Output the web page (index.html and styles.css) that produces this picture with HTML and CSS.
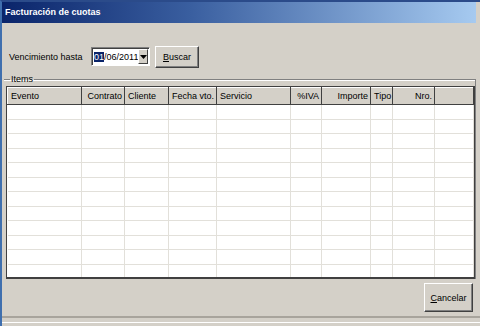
FILE: index.html
```html
<!DOCTYPE html>
<html lang="es">
<head>
    <meta charset="UTF-8">
    <title>Facturación de cuotas</title>
    <link rel="stylesheet" href="styles.css">
</head>
<body>
<div class="window">
    <div class="titlebar">Facturación de cuotas</div>
    <div class="client">
        <div class="filter">
            <span class="label">Vencimiento hasta</span>
            <div class="datebox">
                <span class="datetext"><span class="sel">01</span>/06/2011</span>
                <span class="drop"><svg width="7" height="4" viewBox="0 0 7 4"><path d="M0 0h7L3.5 4z" fill="#000"/></svg></span>
            </div>
            <button class="btn btn-buscar"><u>B</u>uscar</button>
        </div>

        <fieldset class="group">
            <legend>Items</legend>
            <div class="grid">
                <table>
                    <colgroup>
                        <col style="width:74px"><col style="width:43px"><col style="width:44px">
                        <col style="width:48px"><col style="width:74px"><col style="width:31px">
                        <col style="width:49px"><col style="width:22px"><col style="width:42px">
                        <col>
                    </colgroup>
                    <thead>
                    <tr>
                        <th>Evento</th>
                        <th class="r">Contrato</th>
                        <th>Cliente</th>
                        <th class="r">Fecha vto.</th>
                        <th>Servicio</th>
                        <th class="r">%IVA</th>
                        <th class="r">Importe</th>
                        <th>Tipo</th>
                        <th class="r">Nro.</th>
                        <th></th>
                    </tr>
                    </thead>
                    <tbody id="rows"></tbody>
                </table>
            </div>
        </fieldset>

        <div class="footer">
            <button class="btn btn-cancelar"><u>C</u>ancelar</button>
        </div>
    </div>
    <div class="statusline"></div>
</div>
<script>
    // filas vacias de la grilla
    var tb=document.getElementById("rows");
    for (var i=0;i<12;i++){
        var tr=document.createElement("tr");
        for (var j=0;j<10;j++){
            tr.appendChild(document.createElement("td"));
        }
        tb.appendChild(tr);
    }
</script>
</body>
</html>
```

FILE: styles.css
```css
*{
    margin: 0;
    padding: 0;
    box-sizing: border-box;
}
html,body{
    width: 480px;
    height: 326px;
    overflow: hidden;
    background-color: #d4d0c8;
}
body{
    font-family: "Liberation Sans", Arial, sans-serif;
    font-size: 9px;
    color: #000;
    white-space: nowrap;
}
.window{
    width: 480px;
    height: 326px;
    display: flex;
    flex-direction: column;
    border-left: 2px solid #3f6fae;
    border-top: 2px solid #2b4b8a;
    background-color: #d4d0c8;
}
.titlebar{
    height: 21px;
    line-height: 21px;
    padding-left: 3px;
    margin-right: 4px;
    color: #fff;
    font-weight: bold;
    font-size: 9px;
    background: linear-gradient(to right, #0a246a 0%, #3a5fa0 40%, #a6caf0 100%);
}
.client{
    flex: 1;
    display: flex;
    flex-direction: column;
    padding: 22px 4px 0 2px;
}
.filter{
    display: flex;
    align-items: center;
    height: 23px;
    padding-left: 5px;
}
.label{
    width: 82px;
}
.datebox{
    display: flex;
    align-items: center;
    width: 59px;
    height: 19px;
    background: #fff;
    border-top: 1px solid #808080;
    border-left: 1px solid #808080;
    border-right: 1px solid #fff;
    border-bottom: 1px solid #fff;
    box-shadow: inset 1px 1px 0 #404040;
    padding-left: 2px;
}
.datetext{
    flex: 1;
}
.sel{
    background: #0a246a;
    color: #fff;
}
.drop{
    width: 10px;
    height: 15px;
    margin-right: 1px;
    display: flex;
    align-items: center;
    justify-content: center;
    background: #d4d0c8;
    border-top: 1px solid #fff;
    border-left: 1px solid #fff;
    border-right: 1px solid #404040;
    border-bottom: 1px solid #404040;
}
.btn{
    font-family: inherit;
    font-size: 9px;
    background: #d4d0c8;
    border-top: 1px solid #fff;
    border-left: 1px solid #fff;
    border-right: 1px solid #404040;
    border-bottom: 1px solid #404040;
    box-shadow: inset -1px -1px 0 #808080;
}
.btn-buscar{
    width: 44px;
    height: 22px;
    margin-left: 5px;
}
.group{
    margin-top: 6px;
    border: none;
    border-top: 1px solid #808080;
    box-shadow: inset 0 1px 0 #fff;
    border-right: 1px solid #808080;
    padding: 0 0 0 2px;
}
.group legend{
    margin-left: 4px;
    padding: 0 1px;
    line-height: 10px;
}
.grid{
    margin-top: 2px;
    height: 193px;
    background: #fff;
    border-top: 1px solid #404040;
    border-left: 1px solid #404040;
    border-bottom: 2px solid #404040;
    border-right: 1px solid #404040;
    overflow: hidden;
}
table{
    width: 100%;
    table-layout: fixed;
    border-collapse: collapse;
}
th{
    height: 17px;
    font-weight: normal;
    text-align: left;
    padding: 0 2px 0 3px;
    background: #d4d0c8;
    border-top: 1px solid #fff;
    border-left: 1px solid #fff;
    border-right: 1px solid #404040;
    border-bottom: 1px solid #404040;
    overflow: hidden;
}
th.r{
    text-align: right;
}
td{
    height: 14.5px;
    border-right: 1px solid #e2e0da;
    border-bottom: 1px solid #e2e0da;
}
.footer{
    display: flex;
    justify-content: flex-end;
    padding: 4px 3px 0 0;
}
.btn-cancelar{
    width: 49px;
    height: 29px;
}
.statusline{
    height: 7px;
    margin-bottom: 3px;
    border-top: 2px solid #a8a49c;
    border-bottom: 1px solid #fff;
}
```
